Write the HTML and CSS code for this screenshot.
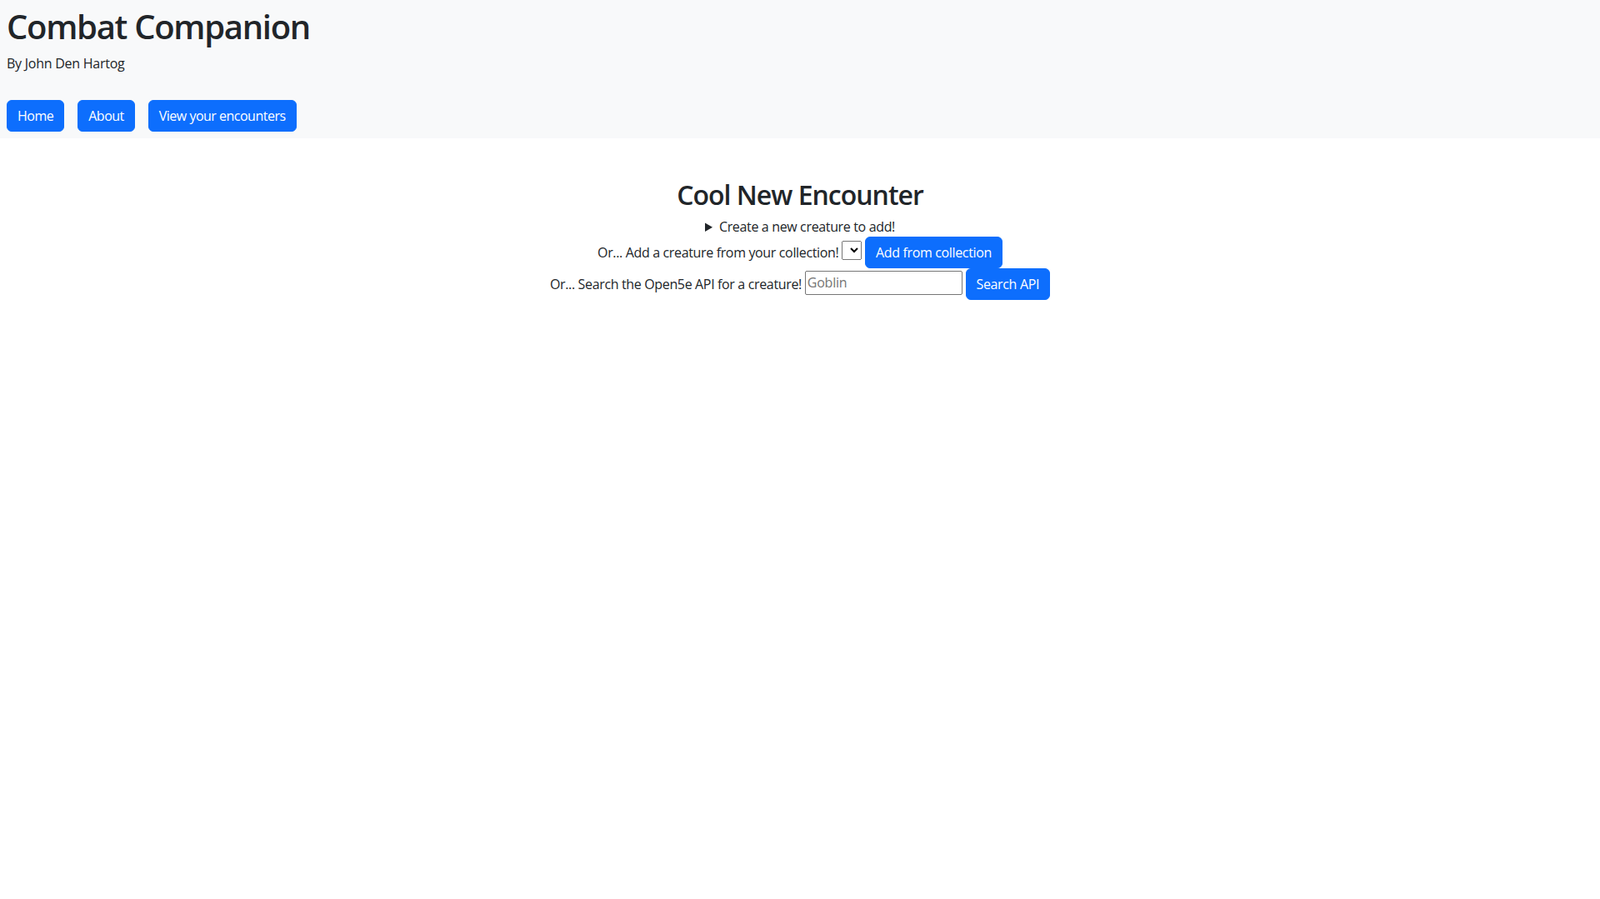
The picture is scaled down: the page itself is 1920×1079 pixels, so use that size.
FILE: index.html
```html
<!DOCTYPE html>
<html lang="en">
<head>
<meta charset="utf-8">
<title>Combat Companion</title>
<link rel="stylesheet" href="styles.css">
</head>
<body>
<header class="site-header">
  <h1 class="site-title">Combat Companion</h1>
  <p class="site-byline">By John Den Hartog</p>
  <nav class="site-nav">
    <a class="btn nav-btn" href="#">Home</a>
    <a class="btn nav-btn" href="#">About</a>
    <a class="btn nav-btn" href="#">View your encounters</a>
  </nav>
</header>
<main class="encounter">
  <h2 class="encounter-title">Cool New Encounter</h2>
  <details class="creature-create">
    <summary>Create a new creature to add!</summary>
  </details>
  <div class="encounter-row">Or... Add a creature from your collection! <select class="collection-select"></select> <button class="btn" type="button">Add from collection</button></div>
  <div class="encounter-row">Or... Search the Open5e API for a creature! <input class="search-input" type="text" placeholder="Goblin"> <button class="btn" type="button">Search API</button></div>
</main>
</body>
</html>
```
FILE: styles.css
```css
* { box-sizing: border-box; }
html, body { margin: 0; padding: 0; }
body {
  font-family: "Open Sans", "Noto Sans", sans-serif;
  font-size: 16px;
  line-height: 1.5;
  letter-spacing: -0.35px;
  color: #212529;
  background: #fff;
}
.site-header {
  background: #f8f9fa;
  padding: 8px 8px 8px 8px;
}
.site-title {
  margin: 0 0 8px 0;
  font-size: 40px;
  font-weight: 600;
  line-height: 1.2;
  letter-spacing: -1.3px;
}
.site-byline {
  margin: 0 0 32px 0;
  letter-spacing: -0.25px;
}
.site-nav {
  display: flex;
  gap: 16px;
}
.btn {
  display: inline-block;
  padding: 6px 12px;
  border: 1px solid #0d6efd;
  border-radius: 6px;
  background: #0d6efd;
  color: #fff;
  font-family: inherit;
  font-size: 16px;
  line-height: 1.5;
  letter-spacing: -0.35px;
  text-decoration: none;
  vertical-align: baseline;
  cursor: pointer;
}
.nav-btn {
  letter-spacing: -0.5px;
}
.encounter {
  text-align: center;
  padding-top: 49px;
}
.encounter-title {
  margin: 0 0 7px 0;
  font-size: 32px;
  font-weight: 600;
  line-height: 1.2;
  letter-spacing: -1px;
}
.creature-create summary {
  cursor: pointer;
}
.collection-select {
  width: 24px;
  height: 23px;
  font-family: inherit;
  font-size: 16px;
  margin: 0;
  vertical-align: 1px;
}
.search-input {
  width: 189px;
  height: 29px;
  padding: 1px 2px;
  border: 1px solid #767676;
  border-radius: 2px;
  font-family: inherit;
  font-size: 16px;
  line-height: 1.5;
  letter-spacing: -0.2px;
  margin: 0;
  color: #212529;
  vertical-align: 2px;
}
.search-input::placeholder {
  color: #757575;
}
```
